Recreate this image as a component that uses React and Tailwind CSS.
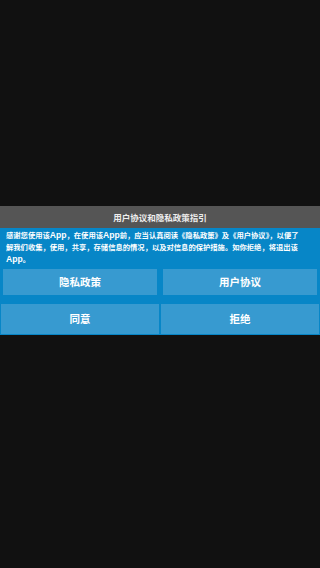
import React from 'react';

const FONT = { fontFamily: '"Noto Sans CJK SC", "Noto Sans", sans-serif' };

const A = () => (
  <span className="text-[8.6px]" style={{ fontFamily: '"Liberation Sans", "Noto Sans CJK SC", sans-serif' }}>
    App
  </span>
);

export default function App() {
  return (
    <div className="w-[320px] h-[568px] bg-[#111111] pt-[206px]" style={FONT}>
      <div className="h-[22px] bg-[#555555] flex items-center justify-center text-[8.5px] font-bold text-[#eeeeee]">
        用户协议和隐私政策指引
      </div>
      <div className="bg-[#0786c7] pt-[1px] pb-[1px]">
        <div className="px-[6px] text-[7.3px] leading-[12px] font-bold text-white">
          <div className="whitespace-nowrap">
            感谢您使用该<A />，在使用该<A />前，应当认真阅读《隐私政策》及《用户协议》，以便了
          </div>
          <div className="whitespace-nowrap">
            解我们收集，使用，共享，存储信息的情况，以及对信息的保护措施。如你拒绝，将退出该
          </div>
          <div className="whitespace-nowrap">
            <A />。
          </div>
        </div>
        <div className="mt-[4px] px-[3px] grid grid-cols-2 gap-[6px]">
          <button className="h-[26px] bg-[#379ad0] text-white text-[10.5px] font-bold">隐私政策</button>
          <button className="h-[26px] bg-[#379ad0] text-white text-[10.5px] font-bold">用户协议</button>
        </div>
        <div className="mt-[9px] px-[1px] grid grid-cols-2 gap-[2px]">
          <button className="h-[30px] bg-[#379ad0] text-white text-[10.5px] font-bold">同意</button>
          <button className="h-[30px] bg-[#379ad0] text-white text-[10.5px] font-bold">拒绝</button>
        </div>
      </div>
    </div>
  );
}
